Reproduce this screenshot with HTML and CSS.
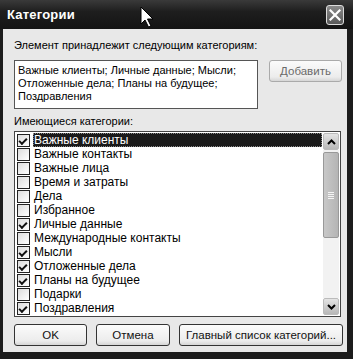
FILE: index.html
```html
<!DOCTYPE html>
<html lang="ru">
<head>
    <meta charset="UTF-8">
    <title>Категории</title>
    <link rel="stylesheet" href="styles.css">
</head>
<body>
    <div class="window">
        <div class="titlebar">
            <span class="title">Категории</span>
            <button class="close" aria-label="Закрыть">
                <svg width="12" height="12" viewBox="0 0 12 12"><path d="M1.5 1.5 L10.5 10.5 M10.5 1.5 L1.5 10.5" stroke="#fff" stroke-width="2.2" stroke-linecap="square"/></svg>
            </button>
            <svg class="cursor" width="14" height="23" viewBox="0 0 14 23"><path d="M1 1 L1 18 L5 14 L8.5 21 L11 20 L7.5 13 L13 13 Z" fill="#fff" stroke="#000" stroke-width="1"/></svg>
        </div>

        <div class="content">
            <div class="label">Элемент принадлежит следующим категориям:</div>
            <div class="top-row">
                <div class="textbox">Важные клиенты; Личные данные; Мысли;<br>Отложенные дела; Планы на будущее;<br>Поздравления</div>
                <button class="btn btn-add">Добавить</button>
            </div>

            <div class="label label-list">Имеющиеся категории:</div>
            <div class="listbox">
                <ul class="items">
                    <li class="item selected"><span class="check on"></span><span class="text">Важные клиенты</span></li>
                    <li class="item"><span class="check"></span><span class="text">Важные контакты</span></li>
                    <li class="item"><span class="check"></span><span class="text">Важные лица</span></li>
                    <li class="item"><span class="check"></span><span class="text">Время и затраты</span></li>
                    <li class="item"><span class="check"></span><span class="text">Дела</span></li>
                    <li class="item"><span class="check"></span><span class="text">Избранное</span></li>
                    <li class="item"><span class="check on"></span><span class="text">Личные данные</span></li>
                    <li class="item"><span class="check"></span><span class="text">Международные контакты</span></li>
                    <li class="item"><span class="check on"></span><span class="text">Мысли</span></li>
                    <li class="item"><span class="check on"></span><span class="text">Отложенные дела</span></li>
                    <li class="item"><span class="check on"></span><span class="text">Планы на будущее</span></li>
                    <li class="item"><span class="check"></span><span class="text">Подарки</span></li>
                    <li class="item"><span class="check on"></span><span class="text">Поздравления</span></li>
                </ul>
                <div class="scrollbar">
                    <div class="arrow">
                        <svg width="9" height="6" viewBox="0 0 9 6"><path d="M1 5 L4.5 1.5 L8 5" fill="none" stroke="#000" stroke-width="2"/></svg>
                    </div>
                    <div class="track">
                        <div class="thumb"><span class="grip"></span></div>
                    </div>
                    <div class="arrow">
                        <svg width="9" height="6" viewBox="0 0 9 6"><path d="M1 1 L4.5 4.5 L8 1" fill="none" stroke="#000" stroke-width="2"/></svg>
                    </div>
                </div>
            </div>

            <div class="buttons">
                <button class="btn btn-ok">OK</button>
                <button class="btn btn-cancel">Отмена</button>
                <button class="btn btn-master">Главный список категорий...</button>
            </div>
        </div>
    </div>
</body>
</html>
```

FILE: styles.css
```css
/* Общий вид страницы */
body {
    margin: 0;
    background: #111;
    font-family: 'Liberation Sans', Arial, sans-serif;
    font-size: 11px;
    color: #000;
}

/* Окно диалога */
.window {
    width: 353px;
    height: 359px;
    background: #1c1c1c;
    display: flex;
    flex-direction: column;
    box-sizing: border-box;
    padding: 0 6px 7px 3px;
}

/* Заголовок окна */
.titlebar {
    height: 29px;
    flex: none;
    display: flex;
    align-items: center;
    position: relative;
    margin: 0 -6px 0 -3px;
    padding: 0 6px 0 7px;
    background: linear-gradient(#3a3a3a, #1e1e1e 40%, #141414);
}

.title {
    flex: 1;
    color: #fff;
    font-family: 'Liberation Sans', Arial, sans-serif;
    font-weight: bold;
    font-size: 13px;
    letter-spacing: 0.2px;
}

.close {
    width: 18px;
    height: 20px;
    padding: 0;
    margin-right: 3px;
    border: 1px solid #ddd;
    border-radius: 3px;
    background: linear-gradient(#8a8a8a, #5a5a5a);
    display: flex;
    align-items: center;
    justify-content: center;
}

.cursor {
    position: absolute;
    left: 140px;
    top: 6px;
}

/* Основная часть */
.content {
    flex: 1;
    background: #e8e8e8;
    padding: 9px 4px 0 11px;
    display: flex;
    flex-direction: column;
}

.label {
    height: 14px;
    line-height: 14px;
}

.label-list {
    margin-top: 5px;
}

.top-row {
    display: flex;
    align-items: flex-start;
    margin-top: 8px;
}

.textbox {
    width: 237px;
    height: 43px;
    background: #fff;
    border: 1px solid #555;
    padding: 3px 2px 1px 3px;
    line-height: 13px;
    font-size: 11px;
    white-space: nowrap;
    overflow: hidden;
}

.btn {
    font-family: 'Liberation Sans', Arial, sans-serif;
    font-size: 11.5px;
    font-weight: normal;
    color: #111;
    background: linear-gradient(#fbfbfb, #ececec 80%, #d6d6d6);
    border: 1px solid #333;
    border-radius: 3px;
    padding: 0;
    height: 22px;
}

.btn-add {
    width: 73px;
    margin-left: 11px;
    color: #6a6a6a;
    border-color: #aaa;
}

/* Список категорий */
.listbox {
    height: 186px;
    margin-top: 3px;
    width: 327px;
    box-sizing: border-box;
    border: 1px solid #444;
    background: #fff;
    display: flex;
    padding: 1px;
}

.items {
    list-style: none;
    margin: 0;
    padding: 0 0 0 1px;
    flex: 1;
    overflow: hidden;
}

.item {
    height: 14px;
    display: flex;
    align-items: center;
}

.check {
    width: 11px;
    height: 11px;
    border: 1px solid #222;
    background: linear-gradient(135deg, #dcdcdc, #fff);
    margin-right: 3px;
    position: relative;
    flex: none;
}

.check.on::after {
    content: "";
    position: absolute;
    left: 2px;
    top: 1px;
    width: 6px;
    height: 3px;
    border-left: 2px solid #111;
    border-bottom: 2px solid #111;
    transform: translate(-1px, 2px) rotate(-45deg);
}

.text {
    padding: 0 2px 0 1px;
    line-height: 14px;
    font-size: 12px;
}

.item.selected .text {
    flex: 1;
    background: #1a1a1a;
    color: #fff;
    outline: 1px dotted #888;
    outline-offset: -1px;
}

/* Полоса прокрутки */
.scrollbar {
    width: 16px;
    display: flex;
    flex-direction: column;
    margin-left: 1px;
}

.arrow {
    height: 17px;
    flex: none;
    border: 1px solid #bbb;
    border-radius: 2px;
    box-sizing: border-box;
    background: linear-gradient(#e4e4e4, #b8b8b8);
    display: flex;
    align-items: center;
    justify-content: center;
}

.track {
    flex: 1;
    background: #f2f2f2;
    padding: 2px 0;
}

.thumb {
    height: 86px;
    box-sizing: border-box;
    border: 1px solid #999;
    border-radius: 2px;
    background: linear-gradient(90deg, #c8c8c8, #b4b4b4);
    display: flex;
    align-items: center;
    justify-content: center;
}

.grip {
    width: 6px;
    height: 7px;
    background: repeating-linear-gradient(#f4f4f4 0 1px, transparent 1px 2px);
}

/* Кнопки внизу */
.buttons {
    display: flex;
    gap: 9px;
    margin-top: 7px;
}

.btn-ok {
    width: 73px;
}

.btn-cancel {
    width: 74px;
}

.btn-master {
    width: 164px;
}
```
